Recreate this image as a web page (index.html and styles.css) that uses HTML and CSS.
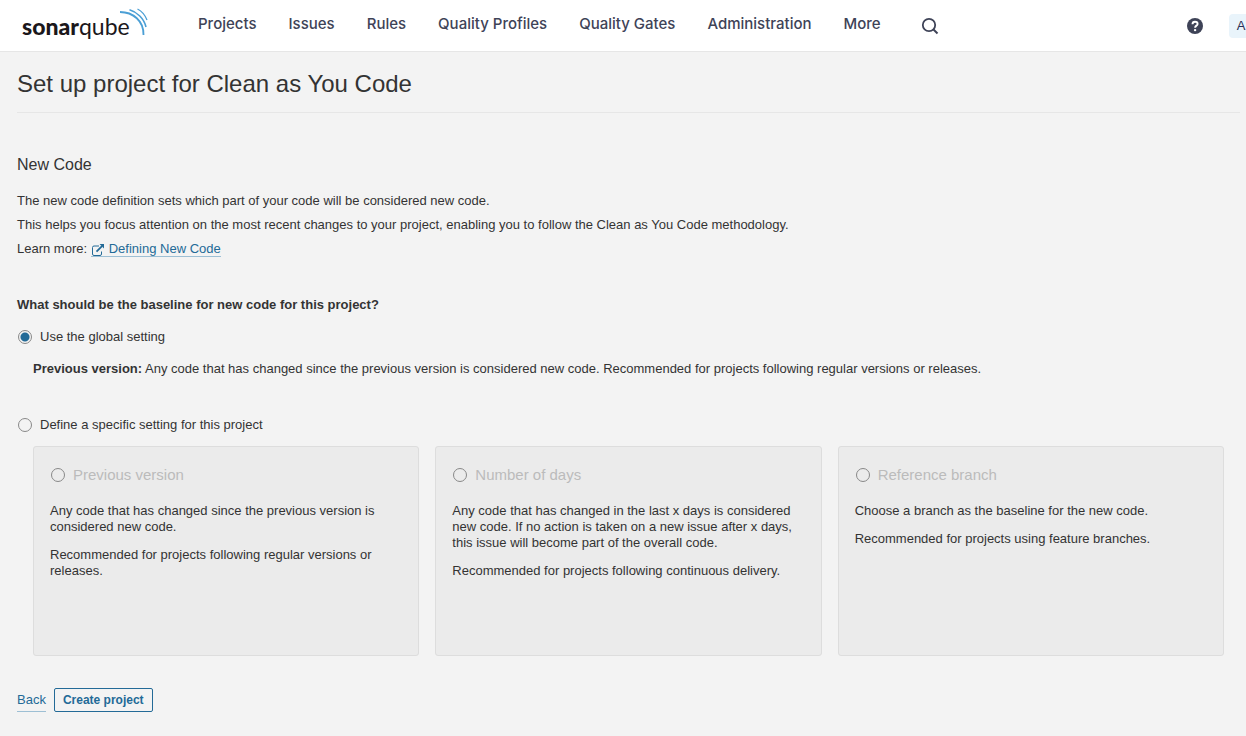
FILE: index.html
```html
<!DOCTYPE html>
<html lang="en">
<head>
<meta charset="utf-8">
<meta name="viewport" content="width=device-width, initial-scale=1">
<title>SonarQube - Set up project</title>
<link rel="stylesheet" href="styles.css">
</head>
<body>
<header class="topbar">
  <a class="logo" href="#" aria-label="SonarQube">
    <span class="logo-name"><b>sonar</b>qube</span>
    <svg class="logo-waves" width="30" height="30" viewBox="0 0 30 30" aria-hidden="true">
      <path d="M2 5C15 5 26 14 25.500 28" stroke-width="1.800"/>
      <path d="M11.500 2.800C19 5 26 11.500 28 20" stroke-width="1.600"/>
      <path d="M19.500 2C23.500 4 27 8 29 13" stroke-width="1.300"/>
    </svg>
  </a>
  <nav class="menu">
    <a href="#">Projects</a>
    <a href="#">Issues</a>
    <a href="#">Rules</a>
    <a href="#">Quality Profiles</a>
    <a href="#">Quality Gates</a>
    <a href="#">Administration</a>
    <a href="#">More</a>
  </nav>
  <button class="icon-button search" type="button" aria-label="Search">
    <svg width="18" height="18" viewBox="0 0 18 18" aria-hidden="true">
      <circle cx="8" cy="8" r="6.200" fill="none" stroke="currentColor" stroke-width="1.800"/>
      <path d="M12.500 12.500L16.500 16.500" stroke="currentColor" stroke-width="2"/>
    </svg>
  </button>
  <button class="icon-button help" type="button" aria-label="Help">
    <svg width="16" height="16" viewBox="0 0 16 16" aria-hidden="true">
      <circle cx="8" cy="8" r="8" fill="currentColor"/>
      <path d="M5.500 6.200C5.500 4.500 6.600 3.700 8 3.700C9.500 3.700 10.600 4.600 10.600 5.900C10.600 7.700 8.100 7.600 8.100 9.700" fill="none" stroke="#fff" stroke-width="1.900"/>
      <circle cx="8.100" cy="12.100" r="1.200" fill="#fff"/>
    </svg>
  </button>
  <button class="avatar" type="button" aria-label="Account">A</button>
</header>

<main class="page">
  <h1 class="page-title">Set up project for Clean as You Code</h1>

  <section class="intro">
    <h2>New Code</h2>
    <p>The new code definition sets which part of your code will be considered new code.</p>
    <p>This helps you focus attention on the most recent changes to your project, enabling you to follow the Clean as You Code methodology.</p>
    <p>Learn more: <a class="doc-link" href="#"><svg width="14" height="14" viewBox="0 0 14 14" aria-hidden="true">
      <path d="M8 3H3Q1.500 3 1.500 4.500V11Q1.500 12.500 3 12.500H9Q10.500 12.500 10.500 11V8.500" fill="none" stroke="currentColor"/>
      <path d="M5.500 8.700L11 3.200" stroke="currentColor" stroke-width="1.800"/>
      <path d="M8.500 1H13V5.500Z" fill="currentColor"/>
    </svg>Defining New Code</a></p>
  </section>

  <form class="baseline">
    <h3>What should be the baseline for new code for this project?</h3>
    <label class="choice"><input type="radio" name="scope" checked>Use the global setting</label>
    <p class="global-note"><b>Previous version:</b> Any code that has changed since the previous version is considered new code. Recommended for projects following regular versions or releases.</p>
    <label class="choice"><input type="radio" name="scope">Define a specific setting for this project</label>

    <div class="cards">
      <div class="card">
        <label class="card-title"><input type="radio" name="kind" disabled>Previous version</label>
        <p>Any code that has changed since the previous version is considered new code.</p>
        <p>Recommended for projects following regular versions or releases.</p>
      </div>
      <div class="card">
        <label class="card-title"><input type="radio" name="kind" disabled>Number of days</label>
        <p>Any code that has changed in the last x days is considered new code. If no action is taken on a new issue after x days, this issue will become part of the overall code.</p>
        <p>Recommended for projects following continuous delivery.</p>
      </div>
      <div class="card">
        <label class="card-title"><input type="radio" name="kind" disabled>Reference branch</label>
        <p>Choose a branch as the baseline for the new code.</p>
        <p>Recommended for projects using feature branches.</p>
      </div>
    </div>

    <div class="actions">
      <a class="back" href="#">Back</a>
      <button class="create" type="button">Create project</button>
    </div>
  </form>
</main>
</body>
</html>
```
FILE: styles.css
```css
* {
  box-sizing: border-box;
}

body {
  margin: 0;
  background: #f3f3f3;
  color: #333;
  font: 13px/24px "Liberation Sans", Arial, sans-serif;
}

h1, h2, h3, p {
  margin: 0;
}

.topbar {
  display: flex;
  align-items: center;
  height: 52px;
  padding-left: 22px;
  overflow: hidden;
  background: #fff;
  border-bottom: 1px solid #e6e6e6;
}

.logo {
  display: flex;
  flex-shrink: 0;
  width: 128px;
  margin-bottom: 4px;
  color: #1b171b;
  text-decoration: none;
}

.logo-name {
  margin-top: 4px;
  font: 23px/32px Lato, sans-serif;
}

.logo-name b {
  font-weight: 900;
}

.logo-waves {
  flex-shrink: 0;
  margin-top: 1px;
  margin-left: -12px;
  fill: none;
  stroke: #4b9fd5;
}

.menu {
  display: flex;
  gap: 32px;
  margin-left: 48px;
  margin-bottom: 4px;
  white-space: nowrap;
}

.menu a {
  color: #3e4357;
  font: 500 15px/20px Inter, sans-serif;
  text-decoration: none;
}

.icon-button {
  display: flex;
  flex-shrink: 0;
  padding: 0;
  border: 0;
  background: none;
  color: #3e4357;
}

.search {
  margin-left: 40px;
}

.help {
  margin-left: auto;
}

.avatar {
  flex-shrink: 0;
  width: 24px;
  height: 24px;
  margin-left: 26px;
  margin-right: -7px;
  padding: 0;
  border: 0;
  border-radius: 4px;
  background: #e9f4fb;
  color: #2a2f55;
  font: 13px/24px "Liberation Sans", Arial, sans-serif;
}

.page {
  padding: 16px 6px 24px 17px;
}

.page-title {
  padding-bottom: 12px;
  border-bottom: 1px solid #e6e6e6;
  font-size: 24px;
  font-weight: 400;
  line-height: 32px;
}

.intro {
  padding-top: 40px;
}

.intro h2 {
  margin-bottom: 12px;
  font-size: 16px;
  font-weight: 400;
  line-height: 24px;
}

.doc-link {
  border-bottom: 1px solid #9dbfd4;
  color: #236a97;
  text-decoration: none;
}

.doc-link svg {
  margin-right: 4px;
  vertical-align: -4px;
}

.baseline {
  padding-top: 32px;
}

.baseline h3 {
  margin-bottom: 8px;
  font-size: 13px;
  font-weight: 700;
}

.choice,
.card-title {
  display: flex;
  align-items: center;
  gap: 8px;
}

.choice {
  padding-left: 1px;
}

input[type="radio"] {
  appearance: none;
  width: 14px;
  height: 14px;
  margin: 0;
  border: 1px solid #888;
  border-radius: 50%;
}

input[type="radio"]:checked {
  background: radial-gradient(circle, #236a97 4px, transparent 5px);
}

.global-note {
  margin: 8px 16px 32px;
}

.cards {
  display: grid;
  grid-template-columns: repeat(3, 1fr);
  gap: 16px;
  margin: 9px 16px 32px;
}

.card {
  min-height: 210px;
  padding: 16px;
  background: #ebebeb;
  border: 1px solid #ddd;
  border-radius: 3px;
  line-height: 16px;
}

.card p {
  margin-top: 12px;
}

.card-title {
  margin-bottom: 16px;
  padding-left: 1px;
  color: #bbb;
  font-size: 15px;
  line-height: 24px;
}

.card-title + p {
  margin-top: 0;
}

.actions {
  display: flex;
  gap: 8px;
}

.back {
  border-bottom: 1px solid #9dbfd4;
  color: #236a97;
  line-height: 23px;
  text-decoration: none;
}

.create {
  height: 24px;
  padding: 0 8px;
  border: 1px solid #236a97;
  border-radius: 2px;
  background: transparent;
  color: #236a97;
  font: 700 12px/22px "Liberation Sans", Arial, sans-serif;
}
```
